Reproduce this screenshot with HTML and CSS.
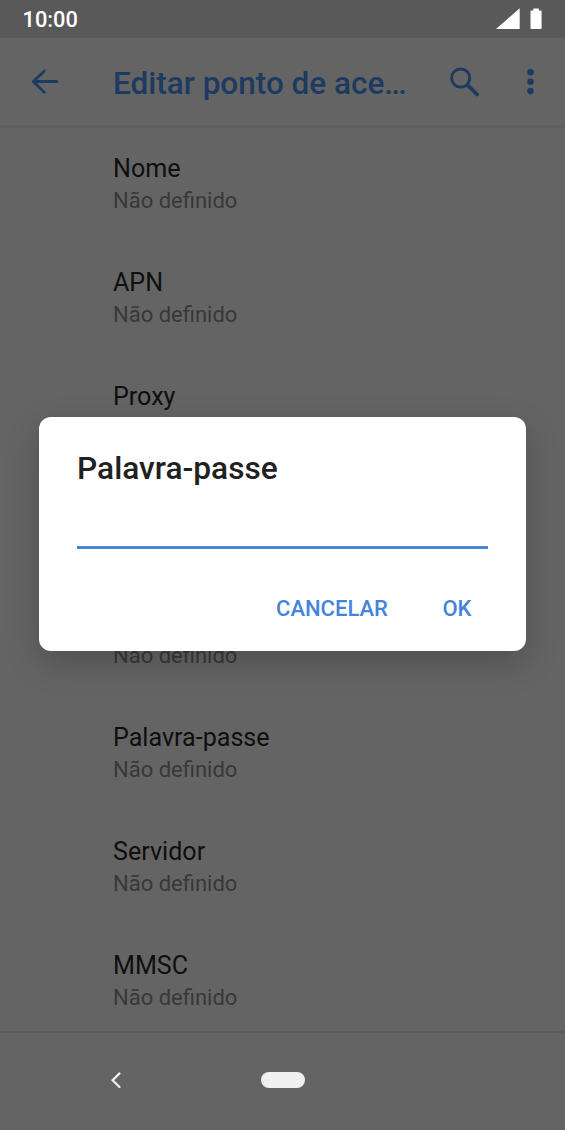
FILE: index.html
```html
<!DOCTYPE html>
<html lang="pt">
<head>
<meta charset="utf-8">
<title>Editar ponto de acesso</title>
<link rel="stylesheet" href="styles.css">
</head>
<body>
<div class="screen">
  <header class="status">
    <span class="clock">10:00</span>
    <svg class="status-icons" width="48" height="24" viewBox="0 0 48 24"><path d="M0 22L23.700 1.300V22Z" fill="#fff"/><path d="M35.300 3.400h2V1.500h5.500v1.900h2a.8.800 0 0 1 .8.800V21.200a.8.800 0 0 1-.8.800H35.300a.8.800 0 0 1-.8-.8V4.200a.8.800 0 0 1 .8-.8Z" fill="#fff"/></svg>
  </header>
  <div class="toolbar">
    <svg class="back" width="28" height="26" viewBox="0 0 28 26"><path d="M25.800 12.500H2.500M13.400 2L2.300 12.500L13.400 23.400" fill="none" stroke="#1d3a61" stroke-width="2.800" stroke-linecap="round" stroke-linejoin="round"/></svg>
    <h1 class="title">Editar ponto de ace…</h1>
    <svg class="search" width="30" height="30" viewBox="0 0 30 30"><circle cx="11.700" cy="11" r="9.100" fill="none" stroke="#1d3a61" stroke-width="2.900"/><path d="M18.800 18.400L28.200 27.600" stroke="#1d3a61" stroke-width="3.600" stroke-linecap="round"/></svg>
    <svg class="more" width="8" height="26" viewBox="0 0 8 26" fill="#1d3a61"><circle cx="4.500" cy="3.300" r="3.300"/><circle cx="4.500" cy="12.700" r="3.300"/><circle cx="4.500" cy="22.100" r="3.300"/></svg>
  </div>
  <main class="list">
    <div class="item"><div class="name">Nome</div><div class="value">Não definido</div></div>
    <div class="item"><div class="name">APN</div><div class="value">Não definido</div></div>
    <div class="item"><div class="name">Proxy</div><div class="value">Não definido</div></div>
    <div class="item"><div class="name">Porta</div><div class="value">Não definido</div></div>
    <div class="item"><div class="name">Nome</div><div class="value">Não definido</div></div>
    <div class="item"><div class="name">Palavra-passe</div><div class="value">Não definido</div></div>
    <div class="item"><div class="name">Servidor</div><div class="value">Não definido</div></div>
    <div class="item"><div class="name">MMSC</div><div class="value">Não definido</div></div>
  </main>
  <nav class="nav">
    <svg class="nav-back" width="10" height="16" viewBox="0 0 10 16"><path d="M8.500 1.400L1.600 8.200L8.500 15" fill="none" stroke="#efefef" stroke-width="2.200" stroke-linecap="round"/></svg>
    <span class="home"></span>
  </nav>
  <section class="dialog">
    <h2 class="dialog-title">Palavra-passe</h2>
    <div class="field"></div>
    <div class="actions"><span>CANCELAR</span><span>OK</span></div>
  </section>
</div>
</body>
</html>
```
FILE: styles.css
```css
* { box-sizing: border-box; }
body { margin: 0; font-family: Roboto, sans-serif; }
.screen { position: relative; width: 565px; height: 1130px; overflow: hidden; background: #646464; display: flex; flex-direction: column; }
.status { height: 38px; background: #595959; display: flex; align-items: center; justify-content: space-between; padding: 0 21px 0 22px; color: #fff; }
.clock { font-size: 21.8px; font-weight: 500; line-height: 38px; padding: 2px 0 0 .5px; }
.toolbar { height: 90px; border-bottom: 3px solid #5e5e5e; display: flex; align-items: center; padding: 0 31px; color: #1d3a61; }
.title { margin: 4px 0 0 54px; width: 337px; font-size: 31.5px; font-weight: 500; line-height: 40px; white-space: nowrap; }
.more { margin-left: 47px; }
.list { flex: 1; padding-top: 25px; overflow: hidden; }
.item { height: 113.8px; padding-left: 113px; }
.name { font-size: 25.1px; line-height: 31px; color: #0f0f0f; }
.value { padding-top: 1px; font-size: 22px; line-height: 32px; color: #383838; }
.nav { height: 99px; border-top: 2px solid #5b5b5b; display: flex; align-items: center; padding: 0 0 3px 111px; }
.home { width: 44px; height: 16px; border-radius: 8px; background: #efefef; margin-left: 139.5px; }
.dialog { position: absolute; left: 39px; top: 417px; width: 487px; height: 234px; border-radius: 12px; background: #fff; padding: 32px 38px; box-shadow: 0 12px 34px rgba(0,0,0,.2); }
.dialog-title { margin: 0; font-size: 31.7px; line-height: 40px; font-weight: 500; color: #212121; }
.field { height: 59.5px; border-bottom: 3px solid #4585d9; }
.actions { display: flex; justify-content: flex-end; gap: 54.5px; padding: 44.5px 16.5px 0 0; font-size: 22px; font-weight: 500; line-height: 32px; color: #4585d9; }
```
